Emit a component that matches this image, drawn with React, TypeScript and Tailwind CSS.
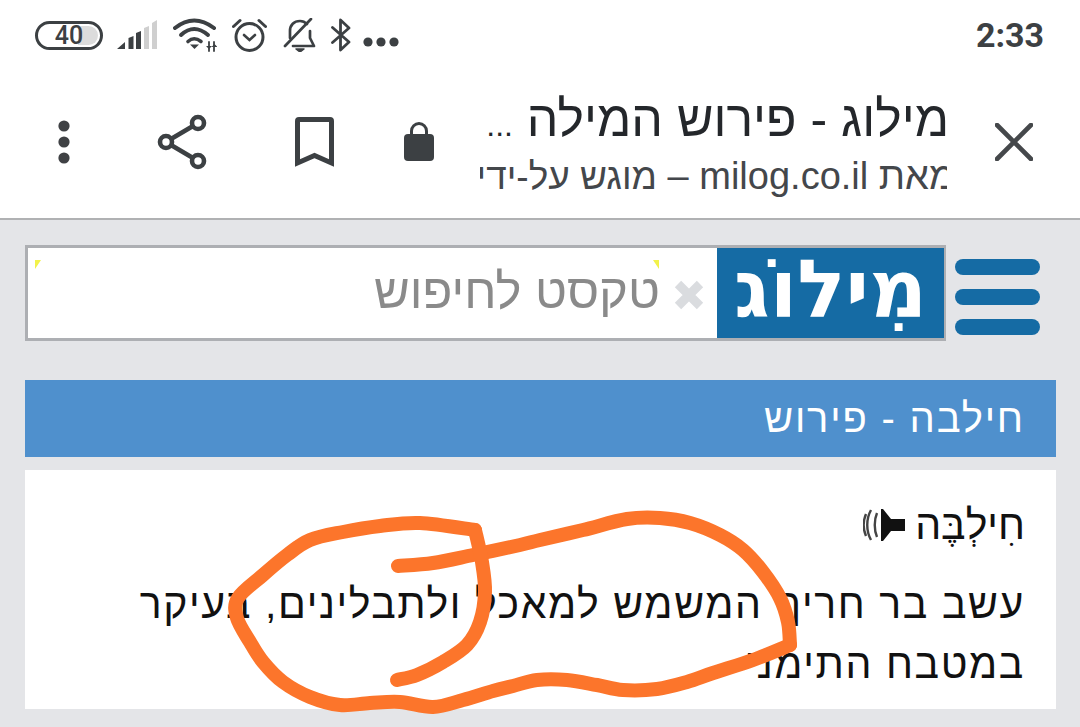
const sans = 'font-["Liberation_Sans",sans-serif]';

const StatusIcons = () => (
  <div className="flex items-center">
    {/* battery */}
    <div className="relative flex h-[29px] w-[68px] items-center justify-center rounded-full border-[3px] border-[#3c4043]">
      <div className="absolute right-[2px] top-[2px] h-[19px] w-[20px] rounded-r-full bg-[#dcdcdc]" />
      <span className="relative font-['Roboto',sans-serif] text-[25px] font-medium leading-none text-[#3c4043]">40</span>
    </div>
    {/* signal */}
    <svg className="ml-[14px]" width="40" height="30" viewBox="0 0 40 30">
      <path d="M0 29l8-7v7z M11.500 29v-11l5-2v13z M19 29v-16l5-2v18z" fill="#3c4043" />
      <path d="M27 29v-21l5-2v23z M35 29v-26l5-3v29z" fill="#cfcfcf" />
    </svg>
    {/* wifi */}
    <svg className="ml-[16px] mt-[-2px]" width="44" height="36" viewBox="0 0 44 36" fill="none" stroke="#3c4043" strokeLinecap="round">
      <path d="M2 12Q21-3 41 12" strokeWidth="4" />
      <path d="M8 19Q21 7 35 19" strokeWidth="4" />
      <path d="M15 25.500Q21 20 28 25.500" strokeWidth="3.600" />
      <path d="M17 28.500h9L21.500 33z" fill="#3c4043" stroke="none" />
      <path d="M36 26v9M41 26v9" strokeWidth="1.800" />
      <path d="M33 30h6l-3 3zM38.500 31h6l-3-3z" fill="#3c4043" stroke="none" />
    </svg>
    {/* alarm */}
    <svg className="ml-[15px]" width="35" height="34" viewBox="0 0 35 34" fill="none" stroke="#3c4043" strokeLinecap="round">
      <circle cx="17.500" cy="19" r="13.500" strokeWidth="3" />
      <path d="M1.500 8.500L8 2.500M33.500 8.500L27 2.500" strokeWidth="3" />
      <path d="M12 17l5.500 5 5.500-5" strokeWidth="2.600" />
    </svg>
    {/* bell off */}
    <svg className="ml-[16px]" width="34" height="34" viewBox="0 0 34 34" fill="none" stroke="#3c4043" strokeLinecap="round" strokeLinejoin="round">
      <path d="M7 20V13C7 7 11 3 17 3c3 0 5 1 7 3M27 13v7l4 8H10" strokeWidth="2.700" />
      <path d="M2 28L28 1" strokeWidth="2.700" />
      <path d="M13 31h8L17 34z" fill="#3c4043" strokeWidth="1.500" />
    </svg>
    {/* bluetooth */}
    <svg className="ml-[14px]" width="20" height="34" viewBox="0 0 20 34" fill="none" stroke="#3c4043" strokeWidth="2.800" strokeLinecap="round" strokeLinejoin="round">
      <path d="M1.500 9.500L18 24l-8.500 8V2L18 10 1.500 24.500" />
    </svg>
    {/* more */}
    <svg className="ml-[12px] mt-[14px]" width="36" height="10" viewBox="0 0 36 10" fill="#3c4043">
      <circle cx="5" cy="5" r="4.600" />
      <circle cx="18" cy="5" r="4.600" />
      <circle cx="31" cy="5" r="4.600" />
    </svg>
  </div>
);

const Toolbar = () => (
  <div className="flex h-[148px] items-center pb-[4px] pl-[57px] pr-[46px]">
    <svg width="14" height="44" viewBox="0 0 14 44" fill="#3f4144">
      <circle cx="7" cy="6" r="5.600" />
      <circle cx="7" cy="22" r="5.600" />
      <circle cx="7" cy="38" r="5.600" />
    </svg>
    <svg className="ml-[86px]" width="50" height="56" viewBox="0 0 50 56" fill="none" stroke="#3c4043" strokeWidth="4.600">
      <circle cx="41" cy="9" r="6" />
      <circle cx="9" cy="28" r="6" />
      <circle cx="41" cy="47" r="6" />
      <path d="M14 25L36 12M14 31l22 13" />
    </svg>
    <svg className="ml-[88px]" width="39" height="50" viewBox="0 0 39 50" fill="none" stroke="#3c4043" strokeWidth="5">
      <path d="M2.500 46V4a1.500 1.500 0 0 1 1.500-1.500h31a1.500 1.500 0 0 1 1.500 1.500v42L19.500 38.500z" />
    </svg>
    <svg className="ml-[70px]" width="30" height="40" viewBox="0 0 30 40">
      <path d="M7.500 14V9a7.500 7.500 0 0 1 15 0v5" fill="none" stroke="#3c4043" strokeWidth="3" />
      <rect x="0" y="12" width="30" height="27" rx="4" fill="#3c4043" />
    </svg>
    <div dir="rtl" className={`ml-[46px] mt-[6px] w-[467px] overflow-hidden ${sans}`}>
      <div className="mr-[-2px] whitespace-nowrap text-[50px] leading-[54px] text-[#24272b]">
        מילוג - פירוש המילה <span className="text-[32px]">...</span>
      </div>
      <div className="mt-[3px] whitespace-nowrap text-[38px] leading-[42px] text-[#44474b]">
        <span className="mr-[-8px]">מאת milog.co.il – <span className="text-[37px]">מוגש על-ידי</span></span>
      </div>
    </div>
    <svg className="ml-[48px]" width="38" height="38" viewBox="0 0 38 38" fill="none" stroke="#45484b" strokeWidth="4.600" strokeLinecap="round">
      <path d="M2 2l34 34M36 2L2 36" />
    </svg>
  </div>
);

const SearchRow = () => (
  <div className="flex items-start pl-[25px] pr-[40px] pt-[25px]">
    <div className="relative flex h-[96px] w-[921px] items-stretch border-[3px] border-r-[2px] border-[#adafb3] bg-white">
      <div className="absolute left-[7px] top-[12px] h-0 w-0 border-r-[6px] border-t-[9px] border-r-transparent border-t-[#f2f24a]" />
      <div className="absolute left-[625px] top-[12px] h-0 w-0 border-l-[6px] border-t-[9px] border-l-transparent border-t-[#f2f24a]" />
      <div dir="rtl" className={`flex flex-1 items-center pr-[57px] pb-[2px] text-[49px] text-[#8a8a8a] ${sans}`}>טקסט לחיפוש</div>
      <svg className="absolute left-[646px] top-[32px]" width="30" height="30" viewBox="0 0 30 30" stroke="#dadcdf" strokeWidth="9">
        <path d="M4 4l22 22M26 4L4 26" />
      </svg>
      <div className="flex w-[227px] items-center justify-center bg-[#156ba4] pb-[6px]">
        <span dir="rtl" className="font-['DejaVu_Sans',sans-serif] text-[80px] font-bold leading-none text-white">מִילוֹג</span>
      </div>
    </div>
    <div className="ml-[9px] mt-[14px] flex flex-col gap-[14px]">
      <div className="h-[16px] w-[85px] rounded-full bg-[#156ba4]" />
      <div className="h-[16px] w-[85px] rounded-full bg-[#156ba4]" />
      <div className="h-[16px] w-[85px] rounded-full bg-[#156ba4]" />
    </div>
  </div>
);

const SpeakerIcon = () => (
  <svg width="42" height="36" viewBox="0 0 42 36">
    <path d="M18 2v32l2 0 8-10h14V12H28L20 2z" fill="#111" />
    <path d="M14 6c-3 7-3 17 0 24M8 3c-5 9-5 21 0 30M3 7c-3 7-3 15 0 22" fill="none" stroke="#444" strokeWidth="2.400" />
  </svg>
);

// pen stroke through the traced points, catmull-rom to bezier
const smooth = (pts: number[][]) => {
  let d = `M${pts[0][0]} ${pts[0][1]}`;
  for (let i = 0; i < pts.length - 1; i++) {
    const p0 = pts[i - 1] || pts[i];
    const p1 = pts[i];
    const p2 = pts[i + 1];
    const p3 = pts[i + 2] || p2;
    d += `C${p1[0] + (p2[0] - p0[0]) / 6} ${p1[1] + (p2[1] - p0[1]) / 6} ${p2[0] - (p3[0] - p1[0]) / 6} ${p2[1] - (p3[1] - p1[1]) / 6} ${p2[0]} ${p2[1]}`;
  }
  return d;
};

const topStroke = [[398, 566], [433, 563], [473, 555], [520, 545], [540, 540], [583, 530], [627, 519], [660, 518], [690, 523], [720, 535], [743, 550], [763, 572], [780, 598], [788, 622], [790, 645]];
const bottomStroke = [[790, 645], [753, 660], [713, 673], [687, 682], [657, 689], [623, 690], [597, 685], [567, 680], [537, 680], [513, 686], [493, 691], [463, 700], [433, 707], [400, 702], [370, 703], [340, 705], [310, 697], [283, 682], [263, 662], [250, 642], [237, 618], [238, 598], [263, 575], [287, 555], [310, 540], [343, 532], [380, 526], [420, 523], [475, 530]];
const innerStroke = [[475, 530], [482, 562], [485, 592], [480, 622], [467, 645], [443, 662], [417, 675], [397, 680]];

const Scribble = () => (
  <svg className="pointer-events-none absolute left-0 top-0" width="1080" height="727" viewBox="0 0 1080 727" fill="none" stroke="#fc752b" strokeWidth="14" strokeLinecap="round" strokeLinejoin="round">
    <path d={smooth(topStroke)} />
    <path d={smooth(bottomStroke)} />
    <path d={smooth(innerStroke)} />
  </svg>
);

export default function App() {
  return (
    <div className="relative h-[727px] w-[1080px] overflow-hidden bg-[#e4e5e8]">
      <div className="border-b-2 border-[#b0b1b3] bg-white">
        <div className="flex h-[70px] items-center justify-between pl-[35px] pr-[36px]">
          <StatusIcons />
          <span className="font-['Roboto',sans-serif] text-[34px] font-bold leading-none text-[#3c4043]">2:33</span>
        </div>
        <Toolbar />
      </div>
      <SearchRow />
      <div dir="rtl" className={`ml-[25px] mr-[24px] mt-[39px] flex h-[77px] items-center bg-[#4f90cd] pb-[2px] pr-[31px] text-[40px] tracking-[1.800px] text-white ${sans}`}>
        חילבה - פירוש
      </div>
      <div dir="rtl" className={`ml-[25px] mr-[24px] mt-[13px] h-[239px] bg-white pr-[31px] pt-[30px] text-[#111] ${sans}`}>
        <div className="flex h-[50px] items-center gap-[10px] text-[41px] leading-none">
          <span>חִילְבֶּה</span>
          <SpeakerIcon />
        </div>
        <p className="mt-[24px] pl-[100px] text-[41px] leading-[60px] tracking-[1.600px]">עשב בר חריף המשמש למאכל ולתבלינים, בעיקר במטבח התימני</p>
      </div>
      <Scribble />
    </div>
  );
}
